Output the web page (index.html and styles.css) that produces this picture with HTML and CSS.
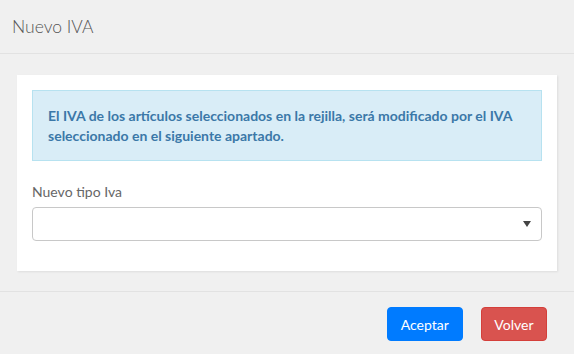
FILE: index.html
```html
<!DOCTYPE html>
<html lang="es">
<head>
  <meta charset="UTF-8" />
  <title>Nuevo IVA</title>
  <link rel="stylesheet" href="styles.css">
</head>
<body>

  <div class="modal-header">
    <h4 class="modal-title">Nuevo IVA</h4>
  </div>

  <div class="modal-body">
    <div class="panel">
      <div class="alert-info">
        El IVA de los artículos seleccionados en la rejilla, será modificado por el IVA seleccionado en el siguiente apartado.
      </div>

      <div class="form-group">
        <label for="tipoIva">Nuevo tipo Iva</label>
        <div class="select-box" id="tipoIva">
          <span class="select-arrow"></span>
        </div>
      </div>
    </div>
  </div>

  <div class="modal-footer">
    <button class="btn btn-primary">Aceptar</button>
    <button class="btn btn-danger">Volver</button>
  </div>

</body>
</html>
```

FILE: styles.css
```css
body {
  font-family: 'Lato', 'Open Sans', sans-serif;
  background: #f0f0f0;
  margin: 0;
  color: #333;
  font-size: 14px;
}
.modal-header {
  height: 53px;
  padding: 0 12px;
  border-bottom: 1px solid #e2e2e2;
  display: flex;
  align-items: center;
}
.modal-title {
  margin: 0;
  font-size: 17.5px;
  font-weight: 300;
  color: #555;
}
.modal-body {
  padding: 21px 17px 20px 17px;
}
.panel {
  background: #fff;
  padding: 15px;
  box-shadow: 1px 1px 2px rgba(0,0,0,0.08);
}
.alert-info {
  background: #d9edf7;
  border: 1px solid #b7e2f0;
  color: #3b78a8;
  font-weight: 700;
  line-height: 20px;
  padding: 15px 15px 14px 15px;
}
.form-group {
  margin-top: 21px;
  margin-bottom: 15px;
}
label {
  display: block;
  color: #666;
  line-height: 20px;
  margin-bottom: 5px;
}
.select-box {
  height: 32px;
  border: 1px solid #c8c8c8;
  border-radius: 4px;
  position: relative;
  background: #fff;
}
.select-arrow {
  position: absolute;
  right: 10px;
  top: 13px;
  width: 0;
  height: 0;
  border-left: 4px solid transparent;
  border-right: 4px solid transparent;
  border-top: 6px solid #444;
}
.modal-footer {
  border-top: 1px solid #e2e2e2;
  padding: 15px 27px 0 0;
  display: flex;
  justify-content: flex-end;
  gap: 18px;
}
.btn {
  font-family: 'Lato', 'Open Sans', sans-serif;
  font-size: 14px;
  height: 34px;
  padding: 0 12.5px;
  border-radius: 4px;
  color: #fff;
  cursor: pointer;
}
.btn-primary {
  background: #007bff;
  border: 1px solid #007bff;
  padding: 0 13px;
}
.btn-danger {
  background: #d9534f;
  border: 1px solid #d43f3a;
}
```
